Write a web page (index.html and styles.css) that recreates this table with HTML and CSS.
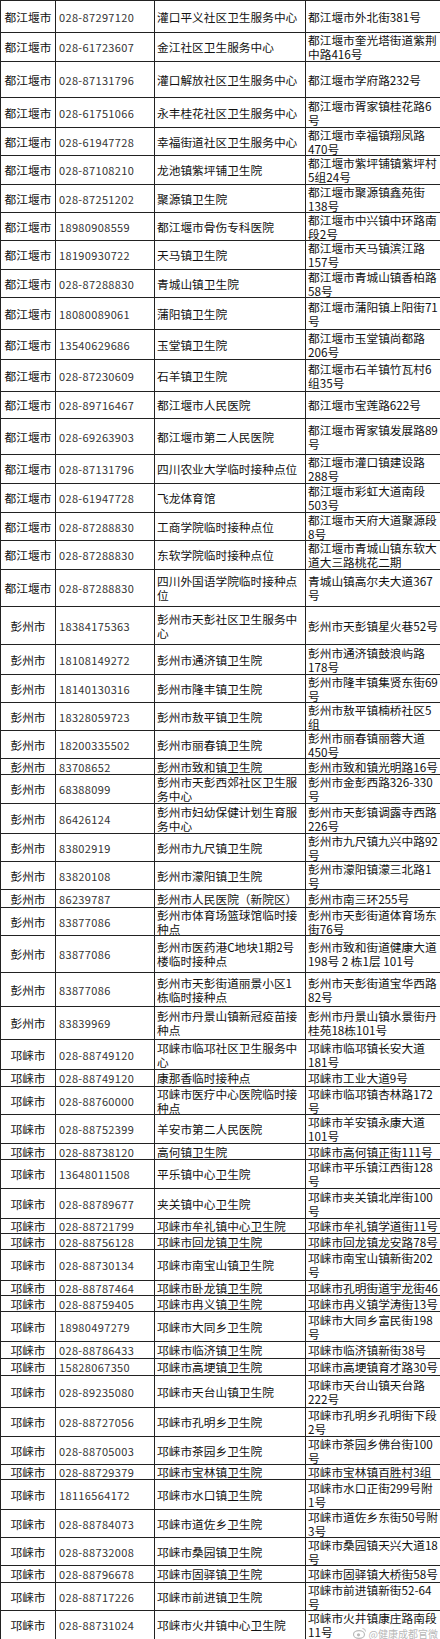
FILE: index.html
```html
<!DOCTYPE html>
<html lang="zh-CN">
<head>
<meta charset="utf-8">
<title>接种点位</title>
<link rel="stylesheet" href="styles.css">
</head>
<body>
<div class="sheet">
<div class="row h32"><div class="c city">都江堰市</div><div class="c tel">028-87297120</div><div class="c name">灌口平义社区卫生服务中心</div><div class="c addr">都江堰市外北街381号</div></div>
<div class="row h29"><div class="c city">都江堰市</div><div class="c tel">028-61723607</div><div class="c name">金江社区卫生服务中心</div><div class="c addr">都江堰市奎光塔街道紫荆<br>中路416号</div></div>
<div class="row h36"><div class="c city">都江堰市</div><div class="c tel">028-87131796</div><div class="c name">灌口解放社区卫生服务中心</div><div class="c addr">都江堰市学府路232号</div></div>
<div class="row h30"><div class="c city">都江堰市</div><div class="c tel">028-61751066</div><div class="c name">永丰桂花社区卫生服务中心</div><div class="c addr">都江堰市胥家镇桂花路6<br>号</div></div>
<div class="row h28"><div class="c city">都江堰市</div><div class="c tel">028-61947728</div><div class="c name">幸福街道社区卫生服务中心</div><div class="c addr">都江堰市幸福镇翔凤路<br>470号</div></div>
<div class="row h29"><div class="c city">都江堰市</div><div class="c tel">028-87108210</div><div class="c name">龙池镇紫坪铺卫生院</div><div class="c addr">都江堰市紫坪铺镇紫坪村<br>5组24号</div></div>
<div class="row h28"><div class="c city">都江堰市</div><div class="c tel">028-87251202</div><div class="c name">聚源镇卫生院</div><div class="c addr">都江堰市聚源镇鑫苑街<br>138号</div></div>
<div class="row h28"><div class="c city">都江堰市</div><div class="c tel">18980908559</div><div class="c name">都江堰市骨伤专科医院</div><div class="c addr">都江堰市中兴镇中环路南<br>段2号</div></div>
<div class="row h29"><div class="c city">都江堰市</div><div class="c tel">18190930722</div><div class="c name">天马镇卫生院</div><div class="c addr">都江堰市天马镇滨江路<br>157号</div></div>
<div class="row h28"><div class="c city">都江堰市</div><div class="c tel">028-87288830</div><div class="c name">青城山镇卫生院</div><div class="c addr">都江堰市青城山镇香柏路<br>58号</div></div>
<div class="row h32"><div class="c city">都江堰市</div><div class="c tel">18080089061</div><div class="c name">蒲阳镇卫生院</div><div class="c addr">都江堰市蒲阳镇上阳街71<br>号</div></div>
<div class="row h30"><div class="c city">都江堰市</div><div class="c tel">13540629686</div><div class="c name">玉堂镇卫生院</div><div class="c addr">都江堰市玉堂镇尚都路<br>206号</div></div>
<div class="row h32"><div class="c city">都江堰市</div><div class="c tel">028-87230609</div><div class="c name">石羊镇卫生院</div><div class="c addr">都江堰市石羊镇竹瓦村6<br>组35号</div></div>
<div class="row h27"><div class="c city">都江堰市</div><div class="c tel">028-89716467</div><div class="c name">都江堰市人民医院</div><div class="c addr">都江堰市宝莲路622号</div></div>
<div class="row h36"><div class="c city">都江堰市</div><div class="c tel">028-69263903</div><div class="c name">都江堰市第二人民医院</div><div class="c addr">都江堰市胥家镇发展路89<br>号</div></div>
<div class="row h29"><div class="c city">都江堰市</div><div class="c tel">028-87131796</div><div class="c name">四川农业大学临时接种点位</div><div class="c addr">都江堰市灌口镇建设路<br>288号</div></div>
<div class="row h29"><div class="c city">都江堰市</div><div class="c tel">028-61947728</div><div class="c name">飞龙体育馆</div><div class="c addr">都江堰市彩虹大道南段<br>503号</div></div>
<div class="row h28"><div class="c city">都江堰市</div><div class="c tel">028-87288830</div><div class="c name">工商学院临时接种点位</div><div class="c addr">都江堰市天府大道聚源段<br>8号</div></div>
<div class="row h29"><div class="c city">都江堰市</div><div class="c tel">028-87288830</div><div class="c name">东软学院临时接种点位</div><div class="c addr">都江堰市青城山镇东软大<br>道大三路桃花二期</div></div>
<div class="row h37"><div class="c city">都江堰市</div><div class="c tel">028-87288830</div><div class="c name">四川外国语学院临时接种点<br>位</div><div class="c addr">青城山镇高尔夫大道367<br>号</div></div>
<div class="row h38"><div class="c city">彭州市</div><div class="c tel">18384175363</div><div class="c name">彭州市天彭社区卫生服务中<br>心</div><div class="c addr">彭州市天彭镇星火巷52号</div></div>
<div class="row h30"><div class="c city">彭州市</div><div class="c tel">18108149272</div><div class="c name">彭州市通济镇卫生院</div><div class="c addr">彭州市通济镇鼓浪屿路<br>178号</div></div>
<div class="row h28"><div class="c city">彭州市</div><div class="c tel">18140130316</div><div class="c name">彭州市隆丰镇卫生院</div><div class="c addr">彭州市隆丰镇集贤东街69<br>号</div></div>
<div class="row h28"><div class="c city">彭州市</div><div class="c tel">18328059723</div><div class="c name">彭州市敖平镇卫生院</div><div class="c addr">彭州市敖平镇楠桥社区5<br>组</div></div>
<div class="row h28"><div class="c city">彭州市</div><div class="c tel">18200335502</div><div class="c name">彭州市丽春镇卫生院</div><div class="c addr">彭州市丽春镇丽蓉大道<br>450号</div></div>
<div class="row h16"><div class="c city">彭州市</div><div class="c tel">83708652</div><div class="c name">彭州市致和镇卫生院</div><div class="c addr">彭州市致和镇光明路16号</div></div>
<div class="row h29"><div class="c city">彭州市</div><div class="c tel">68388099</div><div class="c name">彭州市天彭西郊社区卫生服<br>务中心</div><div class="c addr">彭州市金彭西路326-330<br>号</div></div>
<div class="row h30"><div class="c city">彭州市</div><div class="c tel">86426124</div><div class="c name">彭州市妇幼保健计划生育服<br>务中心</div><div class="c addr">彭州市天彭镇调露寺西路<br>226号</div></div>
<div class="row h28"><div class="c city">彭州市</div><div class="c tel">83802919</div><div class="c name">彭州市九尺镇卫生院</div><div class="c addr">彭州市九尺镇九兴中路92<br>号</div></div>
<div class="row h28"><div class="c city">彭州市</div><div class="c tel">83820108</div><div class="c name">彭州市濛阳镇卫生院</div><div class="c addr">彭州市濛阳镇濛三北路1<br>号</div></div>
<div class="row h18"><div class="c city">彭州市</div><div class="c tel">86239787</div><div class="c name">彭州市人民医院（新院区）</div><div class="c addr">彭州市南三环255号</div></div>
<div class="row h28"><div class="c city">彭州市</div><div class="c tel">83877086</div><div class="c name">彭州市体育场篮球馆临时接<br>种点</div><div class="c addr">彭州市天彭街道体育场东<br>街76号</div></div>
<div class="row h37"><div class="c city">彭州市</div><div class="c tel">83877086</div><div class="c name">彭州市医药港C地块1期2号<br>楼临时接种点</div><div class="c addr">彭州市致和街道健康大道<br>198号 2 栋1层 101号</div></div>
<div class="row h34"><div class="c city">彭州市</div><div class="c tel">83877086</div><div class="c name">彭州市天彭街道丽景小区1<br>栋临时接种点</div><div class="c addr">彭州市天彭街道宝华西路<br>82号</div></div>
<div class="row h33"><div class="c city">彭州市</div><div class="c tel">83839969</div><div class="c name">彭州市丹景山镇新冠疫苗接<br>种点</div><div class="c addr">彭州市丹景山镇水景街丹<br>桂苑18栋101号</div></div>
<div class="row h30"><div class="c city">邛崃市</div><div class="c tel">028-88749120</div><div class="c name">邛崃市临邛社区卫生服务中<br>心</div><div class="c addr">邛崃市临邛镇长安大道<br>181号</div></div>
<div class="row h17"><div class="c city">邛崃市</div><div class="c tel">028-88749120</div><div class="c name">康那香临时接种点</div><div class="c addr">邛崃市工业大道9号</div></div>
<div class="row h28"><div class="c city">邛崃市</div><div class="c tel">028-88760000</div><div class="c name">邛崃市医疗中心医院临时接<br>种点</div><div class="c addr">邛崃市临邛镇杏林路172<br>号</div></div>
<div class="row h29"><div class="c city">邛崃市</div><div class="c tel">028-88752399</div><div class="c name">羊安市第二人民医院</div><div class="c addr">邛崃市羊安镇永康大道<br>101号</div></div>
<div class="row h16"><div class="c city">邛崃市</div><div class="c tel">028-88738120</div><div class="c name">高何镇卫生院</div><div class="c addr">邛崃市高何镇正街111号</div></div>
<div class="row h29"><div class="c city">邛崃市</div><div class="c tel">13648011508</div><div class="c name">平乐镇中心卫生院</div><div class="c addr">邛崃市平乐镇江西街128<br>号</div></div>
<div class="row h30"><div class="c city">邛崃市</div><div class="c tel">028-88789677</div><div class="c name">夹关镇中心卫生院</div><div class="c addr">邛崃市夹关镇北岸街100<br>号</div></div>
<div class="row h15"><div class="c city">邛崃市</div><div class="c tel">028-88721799</div><div class="c name">邛崃市牟礼镇中心卫生院</div><div class="c addr">邛崃市牟礼镇学道街11号</div></div>
<div class="row h16"><div class="c city">邛崃市</div><div class="c tel">028-88756128</div><div class="c name">邛崃市回龙镇卫生院</div><div class="c addr">邛崃市回龙镇龙安路78号</div></div>
<div class="row h31"><div class="c city">邛崃市</div><div class="c tel">028-88730134</div><div class="c name">邛崃市南宝山镇卫生院</div><div class="c addr">邛崃市南宝山镇新街202<br>号</div></div>
<div class="row h15"><div class="c city">邛崃市</div><div class="c tel">028-88787464</div><div class="c name">邛崃市卧龙镇卫生院</div><div class="c addr">邛崃市孔明街道宇龙街46</div></div>
<div class="row h16"><div class="c city">邛崃市</div><div class="c tel">028-88759405</div><div class="c name">邛崃市冉义镇卫生院</div><div class="c addr">邛崃市冉义镇学涛街13号</div></div>
<div class="row h30"><div class="c city">邛崃市</div><div class="c tel">18980497279</div><div class="c name">邛崃市大同乡卫生院</div><div class="c addr">邛崃市大同乡富民街198<br>号</div></div>
<div class="row h17"><div class="c city">邛崃市</div><div class="c tel">028-88786433</div><div class="c name">邛崃市临济镇卫生院</div><div class="c addr">邛崃市临济镇新街38号</div></div>
<div class="row h17"><div class="c city">邛崃市</div><div class="c tel">15828067350</div><div class="c name">邛崃市高埂镇卫生院</div><div class="c addr">邛崃市高埂镇育才路30号</div></div>
<div class="row h32"><div class="c city">邛崃市</div><div class="c tel">028-89235080</div><div class="c name">邛崃市天台山镇卫生院</div><div class="c addr">邛崃市天台山镇天台路<br>222号</div></div>
<div class="row h29"><div class="c city">邛崃市</div><div class="c tel">028-88727056</div><div class="c name">邛崃市孔明乡卫生院</div><div class="c addr">邛崃市孔明乡孔明街下段<br>2号</div></div>
<div class="row h28"><div class="c city">邛崃市</div><div class="c tel">028-88705003</div><div class="c name">邛崃市茶园乡卫生院</div><div class="c addr">邛崃市茶园乡佛台街100<br>号</div></div>
<div class="row h15"><div class="c city">邛崃市</div><div class="c tel">028-88729379</div><div class="c name">邛崃市宝林镇卫生院</div><div class="c addr">邛崃市宝林镇百胜村3组</div></div>
<div class="row h30"><div class="c city">邛崃市</div><div class="c tel">18116564172</div><div class="c name">邛崃市水口镇卫生院</div><div class="c addr">邛崃市水口正街299号附<br>1号</div></div>
<div class="row h28"><div class="c city">邛崃市</div><div class="c tel">028-88784073</div><div class="c name">邛崃市道佐乡卫生院</div><div class="c addr">邛崃市道佐乡东街50号附<br>3号</div></div>
<div class="row h28"><div class="c city">邛崃市</div><div class="c tel">028-88732008</div><div class="c name">邛崃市桑园镇卫生院</div><div class="c addr">邛崃市桑园镇天兴大道18<br>号</div></div>
<div class="row h17"><div class="c city">邛崃市</div><div class="c tel">028-88796678</div><div class="c name">邛崃市固驿镇卫生院</div><div class="c addr">邛崃市固驿镇大桥街58号</div></div>
<div class="row h28"><div class="c city">邛崃市</div><div class="c tel">028-88717226</div><div class="c name">邛崃市前进镇卫生院</div><div class="c addr">邛崃市前进镇新街52-64<br>号</div></div>
<div class="row h29 last"><div class="c city">邛崃市</div><div class="c tel">028-88731024</div><div class="c name">邛崃市火井镇中心卫生院</div><div class="c addr">邛崃市火井镇康庄路南段<br>11号</div></div>
<div class="watermark"><svg class="wb" viewBox="0 0 14 12" width="14" height="12"><ellipse cx="6" cy="7.5" rx="5.5" ry="3.8" fill="none" stroke="#bbb" stroke-width="1.2"/><circle cx="5.5" cy="7.8" r="1.6" fill="#bbb"/><path d="M9.5 1.5a3 3 0 0 1 3 3" fill="none" stroke="#bbb" stroke-width="1"/></svg><span>@健康成都官微</span></div>
</div>
</body>
</html>
```

FILE: styles.css
```css
html, body {
  margin: 0;
  padding: 0;
  background: #fff;
}
body {
  width: 440px;
  height: 1639px;
  overflow: hidden;
  font-family: "Noto Sans CJK SC", "Noto Sans", sans-serif;
  font-size: 11.7px;
  color: #111;
}
.sheet {
  position: relative;
  width: 442px;
  border-top: 1px solid #222;
}
.row {
  display: grid;
  grid-template-columns: 55px 99px 151px 137px;
  box-sizing: border-box;
  border-bottom: 1px solid #222;
}
.c {
  display: flex;
  align-items: center;
  border-left: 1px solid #222;
  line-height: 14px;
  white-space: nowrap;
  overflow: visible;
  padding-left: 2px;
}
.city {
  justify-content: center;
  padding-left: 0;
  font-size: 11.7px;
}
.tel {
  padding-left: 3px;
  font-size: 11px;
  letter-spacing: 0.35px;
  color: #333;
}
.name, .addr {
  padding-left: 2px;
}
.h15 { height: 15px; }
.h16 { height: 16px; }
.h17 { height: 17px; }
.h18 { height: 18px; }
.h27 { height: 27px; }
.h28 { height: 28px; }
.h29 { height: 29px; }
.h30 { height: 30px; }
.h31 { height: 31px; }
.h32 { height: 32px; }
.h33 { height: 33px; }
.h34 { height: 34px; }
.h36 { height: 36px; }
.h37 { height: 37px; }
.h38 { height: 38px; }
.watermark {
  position: absolute;
  right: 4px;
  bottom: 1px;
  display: flex;
  align-items: center;
  gap: 2px;
  font-size: 10px;
  line-height: 11px;
  color: rgba(160, 160, 160, 0.75);
}
.wb {
  display: block;
}
```
